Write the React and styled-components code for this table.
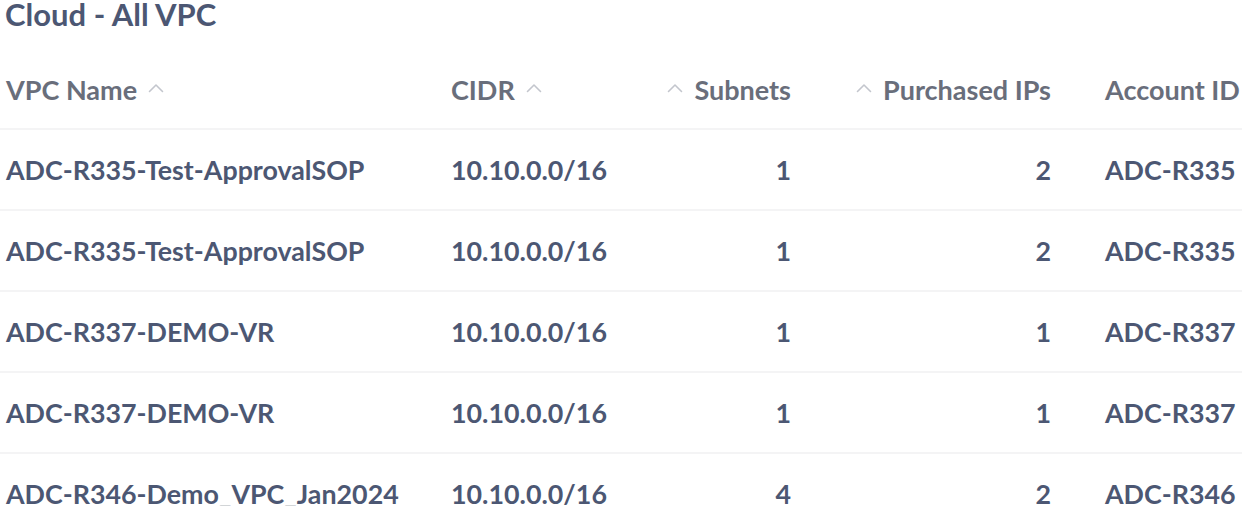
import React from "react";
import styled, { createGlobalStyle } from "styled-components";

const GlobalStyle = createGlobalStyle`
  html, body {
    margin: 0;
    padding: 0;
    background: #ffffff;
  }
  body {
    font-family: Lato, "Noto Sans", sans-serif;
    overflow: hidden;
  }
`;

const COLUMNS = [
  { key: "name", label: "VPC Name", align: "left", sortable: true },
  { key: "cidr", label: "CIDR", align: "left", sortable: true },
  { key: "subnets", label: "Subnets", align: "right", sortable: true },
  { key: "ips", label: "Purchased IPs", align: "right", sortable: true },
  { key: "account", label: "Account ID", align: "left", sortable: false },
];

const ROWS = [
  { name: "ADC-R335-Test-ApprovalSOP", cidr: "10.10.0.0/16", subnets: 1, ips: 2, account: "ADC-R335" },
  { name: "ADC-R335-Test-ApprovalSOP", cidr: "10.10.0.0/16", subnets: 1, ips: 2, account: "ADC-R335" },
  { name: "ADC-R337-DEMO-VR", cidr: "10.10.0.0/16", subnets: 1, ips: 1, account: "ADC-R337" },
  { name: "ADC-R337-DEMO-VR", cidr: "10.10.0.0/16", subnets: 1, ips: 1, account: "ADC-R337" },
  { name: "ADC-R346-Demo_VPC_Jan2024", cidr: "10.10.0.0/16", subnets: 4, ips: 2, account: "ADC-R346" },
];

const Chevron = () => (
  <svg width="16" height="10" viewBox="0 0 16 10" fill="none">
    <path d="M1.5 8.5 L8 2 L14.5 8.5" stroke="#c3c6cd" strokeWidth="1.6" strokeLinecap="round" strokeLinejoin="round" />
  </svg>
);

const App = () => {
  return (
    <Page>
      <GlobalStyle />
      <Title>Cloud - All VPC</Title>
      <Table>
        <HeaderRow>
          {COLUMNS.map((col) => (
            <HeaderCell key={col.key} $align={col.align}>
              {col.sortable && col.align === "right" && <Chevron />}
              <span>{col.label}</span>
              {col.sortable && col.align === "left" && <Chevron />}
            </HeaderCell>
          ))}
        </HeaderRow>
        {ROWS.map((row, i) => (
          <Row key={i}>
            {COLUMNS.map((col) => (
              <Cell key={col.key} $align={col.align}>
                {row[col.key]}
              </Cell>
            ))}
          </Row>
        ))}
      </Table>
    </Page>
  );
};

const Page = styled.div`
  width: 1242px;
  height: 506px;
  overflow: hidden;
`;
const Title = styled.h1`
  margin: -1px 0 0 5px;
  font-size: 31px;
  line-height: 30px;
  font-weight: 700;
  color: #4c5773;
`;
const Table = styled.div`
  width: 1300px;
  margin-top: 21px;
`;
const gridCols = `
  display: grid;
  grid-template-columns: 424px 216px 178px 260px 1fr;
  align-items: center;
  border-bottom: 2px solid #f4f4f5;
`;
const HeaderRow = styled.div`
  ${gridCols}
  height: 78px;
`;
const Row = styled.div`
  ${gridCols}
  height: 79px;
`;
const HeaderCell = styled.div`
  display: flex;
  align-items: center;
  justify-content: ${(p) => (p.$align === "right" ? "flex-end" : "flex-start")};
  gap: 11px;
  padding: 0 27px;
  font-size: 27px;
  font-weight: 700;
  color: #696e7b;
  white-space: nowrap;

  &:first-child {
    padding-left: 6px;
  }
  svg {
    margin-top: -3px;
  }
`;
const Cell = styled.div`
  padding: 0 27px;
  font-size: 26.8px;
  font-weight: 700;
  color: #4c5773;
  text-align: ${(p) => p.$align};
  white-space: nowrap;

  &:first-child {
    padding-left: 6px;
  }
`;

export default App;
